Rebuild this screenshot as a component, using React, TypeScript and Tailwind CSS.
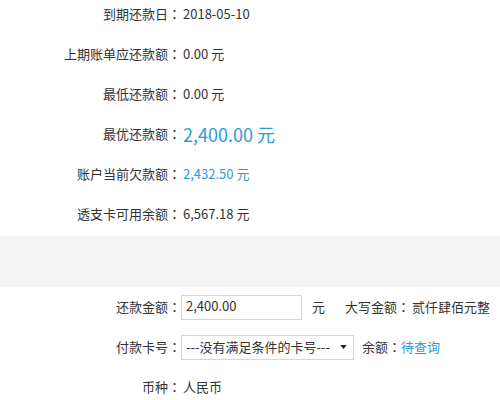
import React from "react";

type rowType = {
  label: string;
  value: string;
  tone?: "plain" | "blue" | "big";
};

const rows: rowType[] = [
  { label: "到期还款日", value: "2018-05-10" },
  { label: "上期账单应还款额", value: "0.00 元" },
  { label: "最低还款额", value: "0.00 元" },
  { label: "最优还款额", value: "2,400.00 元", tone: "big" },
  { label: "账户当前欠款额", value: "2,432.50 元", tone: "blue" },
  { label: "透支卡可用余额", value: "6,567.18 元" },
];

// centred full-width colon, like the original page's font
function Colon() {
  return (
    <span style={{ fontFamily: '"Noto Sans CJK TC", sans-serif' }}>：</span>
  );
}

function Label({ children }: { children: React.ReactNode }) {
  return (
    <div className="w-[181px] shrink-0 text-right">
      {children}
      <Colon />
    </div>
  );
}

export default function App() {
  return (
    <div
      className="w-[500px] h-[400px] overflow-hidden bg-white text-[13px] text-[#333]"
      style={{ fontFamily: '"Noto Sans CJK SC", "Noto Sans", sans-serif' }}
    >
      {/* 账单信息 */}
      <div className="-mt-1.5">
        {rows.map((r) => (
          <div key={r.label} className="h-10 flex items-center">
            <Label>{r.label}</Label>
            <div
              className={`ml-0.5 ${
                r.tone === "big"
                  ? "text-[18px] text-[#2e9bd6]"
                  : r.tone === "blue"
                  ? "text-[#2e9bd6]"
                  : ""
              }`}
            >
              {r.value}
            </div>
          </div>
        ))}
      </div>

      <div className="mt-0.5 h-[51px] bg-[#f4f4f4]"></div>

      {/* 还款表单 */}
      <div>
        <div className="h-10 flex items-center">
          <Label>还款金额</Label>
          <div className="w-[121px] h-[25px] border border-[#d6d6d6] pl-1 leading-[20px]">
            2,400.00
          </div>
          <span className="ml-[10px]">元</span>
          <span className="ml-5">
            大写金额
            <Colon />
          </span>
          <span className="ml-0.5">贰仟肆佰元整</span>
        </div>
        <div className="h-10 flex items-center">
          <Label>付款卡号</Label>
          <div className="w-[173px] h-[25px] border border-[#d6d6d6] flex items-center justify-between pl-1 pr-1.5">
            <span>---没有满足条件的卡号---</span>
            <svg width="7" height="4" viewBox="0 0 8 5">
              <path d="M0 0 L8 0 L4 5 Z" fill="#222" />
            </svg>
          </div>
          <span className="ml-2">
            余额
            <Colon />
          </span>
          <span className="text-[#2e9bd6]">待查询</span>
        </div>
        <div className="h-10 flex items-center">
          <Label>币种</Label>
          <div className="ml-0.5">人民币</div>
        </div>
      </div>
    </div>
  );
}
